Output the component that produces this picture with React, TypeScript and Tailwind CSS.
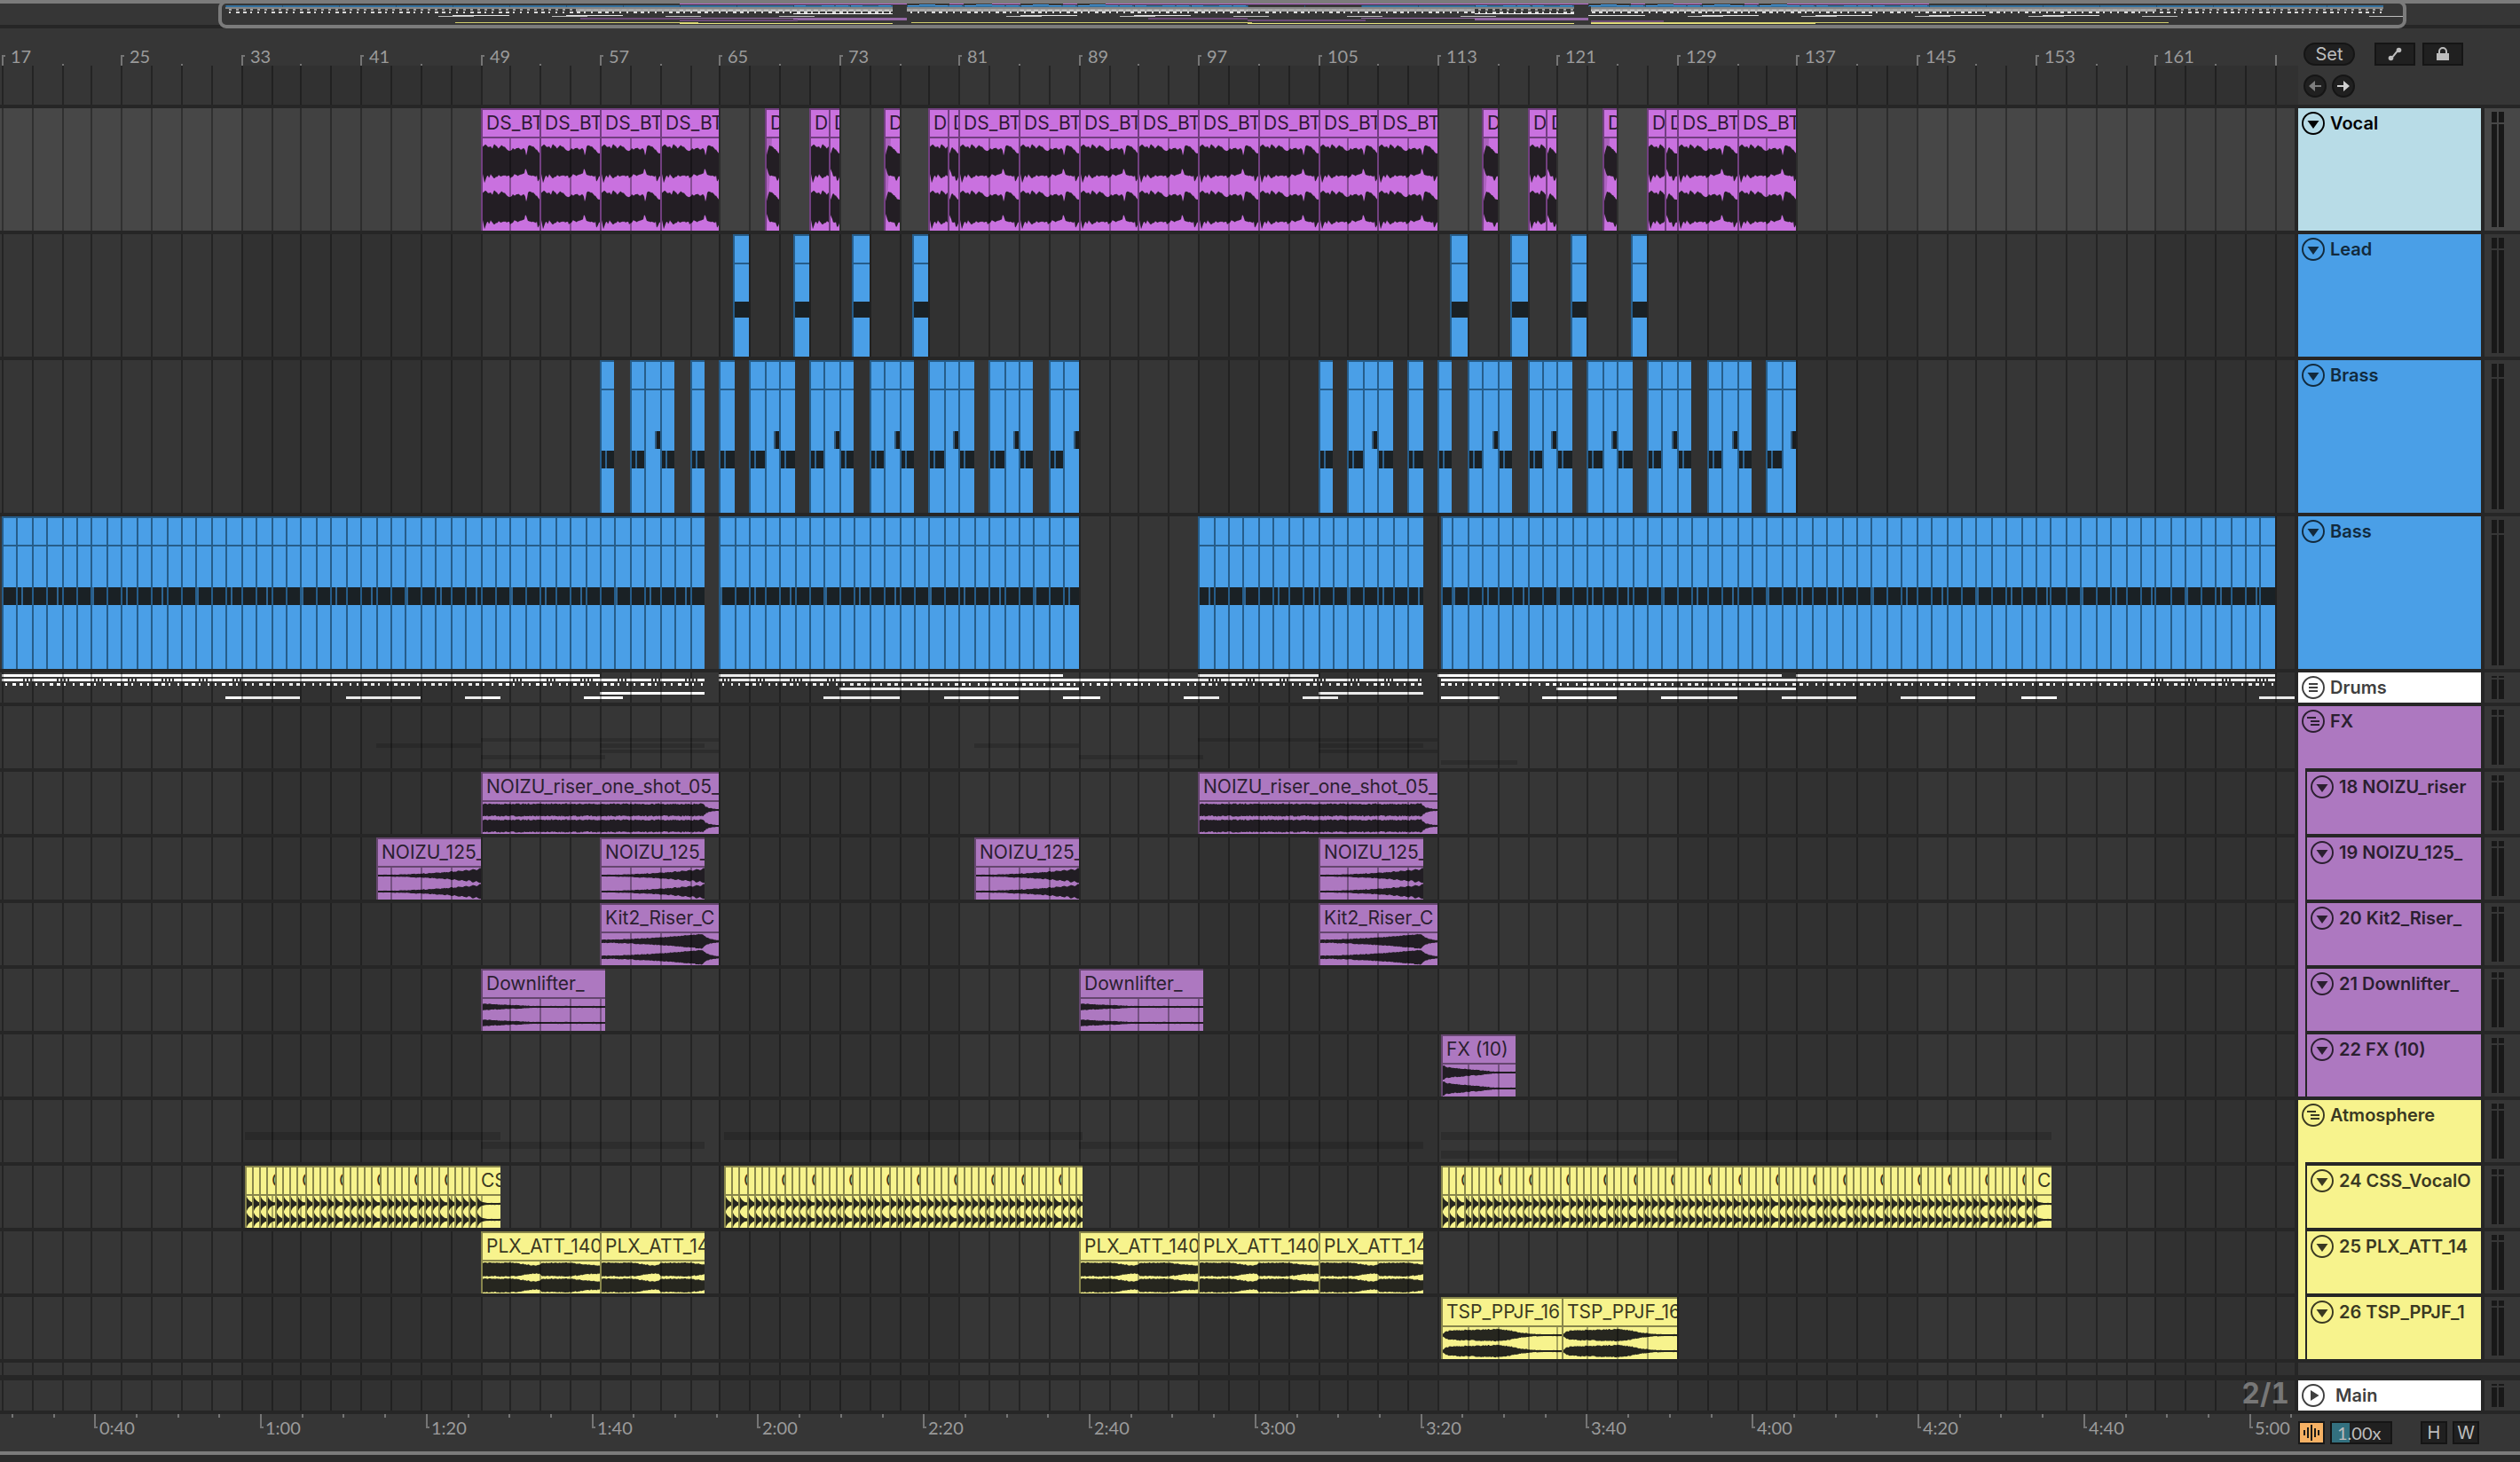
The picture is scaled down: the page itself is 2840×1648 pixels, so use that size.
import React from 'react';
import type { ReactNode } from 'react';

type Span = [number, number];
type Tone = 'vocal' | 'blue' | 'fx' | 'yellow';
type Envelope = (x: number, width: number) => [number, number];

/* ---------- timeline geometry ---------- */

const BAR_WIDTH = 16.855;
const barX = (bar: number) => 2 * Math.floor((2.86 + BAR_WIDTH * (bar - 17)) / 2);
const timeX = (sec: number) => Math.round(293 + (sec - 60) * 9.34);
const range = (n: number) => Array.from({ length: n }, (_, i) => i);
const noise = (i: number) => {
  const v = Math.sin(i * 12.9898 + 4.1) * 43758.5453;
  return v - Math.floor(v);
};

const GRID_PATH = range(140)
  .map((i) => `M${barX(17 + i * 2)} 0h2v200h-2z`)
  .join('');
const ZONES = range(8).map((i) => ({ x: barX(33 + i * 32), w: barX(49 + i * 32) - barX(33 + i * 32) }));

function GridOverlay() {
  return (
    <svg className="pointer-events-none absolute inset-0 h-full w-full" aria-hidden="true">
      {ZONES.map((z) => (
        <rect key={z.x} x={z.x} y="0" width={z.w} height="200" fill="#000" fillOpacity="0.08" />
      ))}
      <path d={GRID_PATH} fill="#000" fillOpacity="0.32" />
    </svg>
  );
}

/* ---------- waveforms ---------- */

const lerpPoints = (pts: [number, number, number][], t: number): [number, number] => {
  for (let i = 1; i < pts.length; i++) {
    if (t <= pts[i][0]) {
      const [t0, a0, b0] = pts[i - 1];
      const [t1, a1, b1] = pts[i];
      const f = (t - t0) / (t1 - t0 || 1);
      return [a0 + (a1 - a0) * f, b0 + (b1 - b0) * f];
    }
  }
  const last = pts[pts.length - 1];
  return [last[1], last[2]];
};

const VOCAL_POINTS: [number, number, number][] = [
  [0, 16, 14], [1, 17, 18], [2, 17, 23], [3, 18, 21], [5, 17, 15], [7, 15, 17], [9, 16, 14], [11, 14, 16],
  [13, 19, 18], [15, 17, 17], [18, 14, 15], [21, 18, 16], [24, 16, 14], [27, 13, 16], [30, 11, 15],
  [31, 11, 18], [34, 14, 16], [36, 13, 14], [40, 14, 15], [44, 13, 14], [47, 14, 12], [48, 11, 8], [49, 6, 8],
  [51, 15, 14], [53, 18, 15], [55, 17, 15], [58, 15, 16], [60, 13, 17], [61, 12, 15], [62, 11, 22],
  [63, 9, 21], [65, 8, 16],
];

const vocalEnvelope = (offsetBars: number): Envelope => (x) => {
  const t = x + offsetBars * BAR_WIDTH;
  const [u, d] = lerpPoints(VOCAL_POINTS, t);
  const k = offsetBars > 0 ? Math.min(1, 0.5 + x / 6) : 1;
  return [(u + noise(Math.round(t)) * 1.6) * k, (d + noise(Math.round(t) + 70) * 1.6) * k];
};

const mono = (fn: (t: number, x: number, width: number) => number, rough: number): Envelope => (x, width) => {
  const a = fn(x / width, x, width);
  const r = Math.min(rough, a * 0.4);
  return [Math.max(1, a + (noise(x) - 0.5) * r), Math.max(1, a + (noise(x + 300) - 0.5) * r)];
};

const riserEnvelope = mono((t, x, w) => (w - x > 18 ? 6.8 : 0.9 + 6 * Math.exp(-(18 - (w - x)) / 5)), 1.6);
const sweepEnvelope = mono((t, x) => (1 + 6.6 * t * t) * (1 + 0.14 * t * Math.sin(x * 0.78)), 0.8);
const kitEnvelope = mono((t) => (t < 0.86 ? 1.8 + 6.4 * Math.pow(t / 0.86, 1.7) : 1 + 7.4 * Math.exp(-(t - 0.86) * 22)), 1);
const downEnvelope = mono((t) => 1 + 2.6 * Math.max(0, 1 - t / 0.42), 0.8);
const impactEnvelope = mono((t) => 1 + 5.4 * Math.max(0, 1 - t / 0.72) + (t < 0.03 ? 1.5 : 0), 1);
const stabEnvelope = mono((t, x) => 1 + 7 * Math.exp(-x / 3), 0.4);
const padEnvelope = mono(
  (t) =>
    lerpPoints(
      [[0, 7.6, 0], [0.25, 7.8, 0], [0.32, 6.4, 0], [0.4, 5, 0], [0.45, 4.4, 0], [0.48, 5, 0], [0.5, 7.4, 0], [0.75, 7.6, 0], [0.82, 6.2, 0], [0.92, 5, 0], [1, 4.6, 0]],
      t,
    )[0],
  1.2,
);
const texEnvelope = mono(
  (t) =>
    lerpPoints(
      [[0, 1.5, 0], [0.03, 4.4, 0], [0.1, 5.6, 0], [0.3, 6, 0], [0.45, 6.8, 0], [0.55, 5.6, 0], [0.65, 2.8, 0], [0.75, 1.4, 0], [0.85, 1, 0], [1, 1, 0]],
      t,
    )[0],
  1.4,
);

function wavePath(width: number, height: number, env: Envelope) {
  const xs = range(width + 1);
  return [height / 4, (height * 3) / 4]
    .map((c) => {
      const up = xs.map((x) => `${x} ${(c - env(x, width)[0]).toFixed(1)}`);
      const down = xs.map((x) => `${x} ${(c + env(x, width)[1]).toFixed(1)}`).reverse();
      return `M${up.join('L')}L${down.join('L')}Z`;
    })
    .join('');
}

/* ---------- clips ---------- */

const CLIP_TONE: Record<Tone, { box: string; head: string; wave: string }> = {
  vocal: { box: 'bg-[#c971df] border-[#723f80]', head: 'border-[#723f80] text-[#2f1a35]', wave: '#231e24' },
  blue: { box: 'bg-[#4a9fe7] border-[#265d8a]', head: 'border-[#265d8a]', wave: '#1a2125' },
  fx: { box: 'bg-[#ad78c0] border-[#65466f]', head: 'border-[#65466f] text-[#2b1f30]', wave: '#211d23' },
  yellow: { box: 'bg-[#f7f38d] border-[#88864c]', head: 'border-[#88864c] text-[#3a3922]', wave: '#26261f' },
};

function Clip({ span, tone, label, children }: { span: Span; tone: Tone; label?: string; children?: ReactNode }) {
  const left = barX(span[0]);
  const width = barX(span[1]) - left;
  const t = CLIP_TONE[tone];
  return (
    <div className={`absolute inset-y-0 flex flex-col overflow-hidden border-t-2 border-l-2 ${t.box}`} style={{ left, width }}>
      <div className={`h-8 shrink-0 overflow-hidden border-b-2 pl-1 text-[21px] leading-[30px] whitespace-nowrap ${t.head}`}>
        {width > 9 ? label : null}
      </div>
      <svg className="min-h-0 w-full flex-1" aria-hidden="true">
        {children}
      </svg>
    </div>
  );
}

function AudioClip({ span, tone, label, env, body = 36, fade = false }: { span: Span; tone: Tone; label: string; env: Envelope; body?: number; fade?: boolean }) {
  const left = barX(span[0]);
  const width = barX(span[1]) - left - 2;
  const lines = range(90)
    .map((i) => barX(17 + i * 2) - left - 2)
    .filter((x) => x > 0 && x < width);
  return (
    <Clip span={span} tone={tone} label={label}>
      {fade && <path d={`M0 0H6L0 ${body}Z`} fill="#000" fillOpacity="0.14" />}
      <path d={wavePath(width, body, env)} fill={CLIP_TONE[tone].wave} />
      {lines.map((x) => (
        <rect key={x} x={x} y="0" width="2" height={body} fill="#000" fillOpacity="0.32" />
      ))}
    </Clip>
  );
}

/* ---------- arrangement data ---------- */

const VOCAL_CLIPS: { span: Span; offset: number; fade?: boolean }[] = [
  ...[49, 53, 57, 61].map((b) => ({ span: [b, b + 4] as Span, offset: 0 })),
  { span: [68, 69], offset: 3, fade: true },
  { span: [71, 72.25], offset: 0 },
  { span: [72.25, 73], offset: 3.25 },
  { span: [76, 77], offset: 3, fade: true },
  { span: [79, 80.25], offset: 0 },
  { span: [80.25, 81], offset: 3.25 },
  ...range(8).map((i) => ({ span: [81 + i * 4, 85 + i * 4] as Span, offset: 0 })),
  { span: [116, 117], offset: 3, fade: true },
  { span: [119, 120.25], offset: 0 },
  { span: [120.25, 121], offset: 3.25 },
  { span: [124, 125], offset: 3, fade: true },
  { span: [127, 128.25], offset: 0 },
  { span: [128.25, 129], offset: 3.25 },
  { span: [129, 133], offset: 0 },
  { span: [133, 137], offset: 0 },
];

const LEAD_CLIPS: Span[] = [65.9, 69.9, 73.9, 77.9, 113.85, 117.9, 121.9, 125.9].map((b) => [b, Math.ceil(b) + 1]);

const BRASS_PHRASE: [number, 'low' | 'high'][] = [
  [57, 'low'],
  [59, 'low'], [60, 'high'], [61, 'low'],
  [63, 'low'],
  [65, 'low'],
  ...[67, 71, 75, 79, 83].flatMap((b): [number, 'low' | 'high'][] => [[b, 'low'], [b + 1, 'high'], [b + 2, 'low']]),
  [87, 'low'], [88, 'high'],
];
const BRASS_CLIPS = [0, 48].flatMap((d) => BRASS_PHRASE.map(([b, kind]) => ({ bar: b + d, kind })));

const BASS_CLIPS: Span[] = [
  ...range(47).map((i): Span => [17 + i, 18 + i]),
  ...range(24).map((i): Span => [65 + i, 66 + i]),
  ...range(15).map((i): Span => [97 + i, 98 + i]),
  [113.2, 114],
  ...range(55).map((i): Span => [114 + i, 115 + i]),
];

const bassMarks = ([a, b]: Span) =>
  [2.05, 4.3, 6.65]
    .map((p) => Math.floor(a / 7) * 7 + p)
    .flatMap((p) => [p, p + 7])
    .filter((p) => p >= a && p < b)
    .map((p) => barX(p) - barX(a) - 2);

const HAT_SIZES = [2, 4, 4, 2, 2, 2, 4, 4, 2, 2, 4, 4, 2, 2];
const inSpans = (b: number, spans: Span[]) => spans.some(([s, e]) => b >= s && b < e);
const PLAYED: Span[] = [[17, 64], [65, 112], [113.2, 169]];
const KICK: Span[] = [[17, 57], [65, 88], [97, 105], [113, 136], [137, 169]];
const RIDE: Span[] = [[73, 89], [121, 137]];
const FILL: Span[] = [[57, 64], [105, 112]];
const CRASH: Span[] = [
  [32, 37], [40, 45], [48, 50.4], [55.9, 58.5], [72, 77], [80, 85], [88, 90.4], [96, 98.4], [104, 106.4],
  [113.2, 117.2], [120, 125], [128, 133], [136, 141], [144, 149], [152, 154.4], [168, 172],
];
const ROLLS: Span[] = [[17, 33], [49, 64], [65, 73.4], [97, 112], [160.5, 169]];
const HATS = range(310)
  .map((i) => ({ bar: 17.22 + i * 0.5, size: HAT_SIZES[i % 14] }))
  .filter((h) => inSpans(h.bar, PLAYED));
const ROLL_GAPS = range(24)
  .flatMap((i) => [i * 7 + 2.15, i * 7 + 4.45, i * 7 + 6.7].map((b, k) => ({ bar: b, n: k === 2 ? 4 : 3 })))
  .filter((r) => inSpans(r.bar, ROLLS));

const bars = (spans: Span[], y: number, h: number, fill: string, opacity = 1) =>
  spans.map(([a, b]) => <rect key={`${y}-${a}`} x={barX(a)} y={y} width={barX(b) - barX(a)} height={h} fill={fill} fillOpacity={opacity} />);

function DrumsOverview() {
  return (
    <svg className="absolute inset-0 h-full w-full" aria-hidden="true">
      {bars(KICK, 2, 3, '#fff')}
      {bars(PLAYED, 7, 3, '#fff')}
      {ROLL_GAPS.flatMap((r) =>
        range(r.n).map((i) => <rect key={`${r.bar}-${i}`} x={barX(r.bar) + i * 4} y="7" width="2" height="3" fill="#363636" />),
      )}
      {HATS.map((h) => (
        <rect key={h.bar} x={barX(h.bar)} y="12" width={h.size} height="3" fill="#fff" />
      ))}
      {bars(RIDE, 17, 3, '#fff')}
      {bars(FILL, 22, 3, '#fff')}
      {bars(CRASH, 27, 3, '#fff')}
    </svg>
  );
}

function GroupOverview({ rows }: { rows: { y: number; h: number; spans: Span[] }[] }) {
  return (
    <svg className="absolute inset-0 h-full w-full" aria-hidden="true">
      {rows.map((r) => (
        <g key={r.y}>{bars(r.spans, r.y, r.h, '#000', 0.16)}</g>
      ))}
    </svg>
  );
}

const FX_ROWS: { y: number; h: number; spans: Span[] }[] = [
  { y: 36, h: 4, spans: [[49, 65], [97, 113]] },
  { y: 42, h: 5, spans: [[42, 49], [57, 64], [82, 89], [105, 112]] },
  { y: 49, h: 4, spans: [[57, 65], [105, 113]] },
  { y: 55, h: 5, spans: [[49, 57.3], [89, 97.3]] },
  { y: 61, h: 5, spans: [[113.2, 118.3]] },
];
const ATMO_ROWS: { y: number; h: number; spans: Span[] }[] = [
  { y: 36, h: 9, spans: [[33.25, 50.3], [65.25, 89.3], [113.2, 154.1]] },
  { y: 47, h: 8, spans: [[49, 64], [89, 112]] },
  { y: 57, h: 9, spans: [[113.2, 129]] },
];

const chopped = (start: number, count: number, end: number): Span[] =>
  range(count).map((i) => [start + i * 0.5, i === count - 1 ? end : start + (i + 1) * 0.5]);
const CSS_CLIPS: Span[] = [...chopped(33.24, 32, 50.35), ...chopped(65.3, 48, 89.25), ...chopped(113.24, 80, 154.1)];

/* ---------- track headers ---------- */

type IconKind = 'fold' | 'drums' | 'group' | 'play';

function CircleIcon({ kind }: { kind: IconKind }) {
  return (
    <svg className="size-[26px]" viewBox="0 0 26 26" fill="none" stroke="currentColor" strokeWidth="2" aria-hidden="true">
      <circle cx="13" cy="13" r="12" strokeWidth="1.9" />
      {kind === 'fold' && <path d="M6.5 10h13L13 19z" fill="currentColor" stroke="none" />}
      {kind === 'drums' && <path d="M8 9h10M8 13h10M8 17h10" />}
      {kind === 'group' && <path d="M6 9h10M10 13h10M10 17h10" />}
      {kind === 'play' && <path d="M10 7l9.5 6L10 19z" fill="currentColor" stroke="none" />}
    </svg>
  );
}

function TrackTitle({ name, icon, tone, gap = 'gap-1.5' }: { name: string; icon: IconKind; tone: string; gap?: string }) {
  return (
    <div className={`min-w-0 flex-1 overflow-hidden ${tone}`}>
      <div className={`flex h-[34px] items-center pl-1 ${gap}`}>
        <button type="button" aria-label={`Fold ${name}`} className="shrink-0">
          <CircleIcon kind={icon} />
        </button>
        <span className="text-xl font-semibold whitespace-nowrap">{name}</span>
      </div>
    </div>
  );
}

function Meter({ selected = false }: { selected?: boolean }) {
  return (
    <div className={`flex w-10 shrink-0 gap-0.5 py-1 pl-2 ${selected ? 'bg-[#474747]' : 'bg-[#363636]'}`}>
      {[0, 1].map((i) => (
        <div key={i} className="flex w-1.5 flex-col gap-0.5">
          <div className="flex-[2] bg-[#181818]" />
          <div className="flex-[19] bg-[#181818]" />
        </div>
      ))}
    </div>
  );
}

interface TrackProps {
  name: string;
  icon?: IconKind;
  tone: string;
  height: string;
  selected?: boolean;
  parent?: string;
  last?: boolean;
  under?: ReactNode;
  children?: ReactNode;
}

function Track({ name, icon = 'fold', tone, height, selected = false, parent, last = false, under, children }: TrackProps) {
  return (
    <section className="flex" aria-label={name}>
      <div className={`relative mr-1 mb-1 min-w-0 flex-1 overflow-hidden ${height} ${selected ? 'bg-[#474747]' : 'bg-[#363636]'}`}>
        {under}
        <GridOverlay />
        {children}
      </div>
      <div className="mr-1 flex w-[206px] shrink-0">
        {parent && <div className={`mr-0.5 w-2 shrink-0 ${last ? 'mb-1' : ''} ${parent}`} />}
        <div className={`flex min-w-0 flex-1 ${icon === 'group' ? '' : 'mb-1'}`}>
          {icon === 'group' ? (
            <div className="flex min-w-0 flex-1 flex-col">
              <TrackTitle name={name} icon={icon} tone={tone} />
              <div className={`h-1 w-2 ${tone}`} />
            </div>
          ) : (
            <TrackTitle name={name} icon={icon} tone={tone} />
          )}
        </div>
      </div>
      <div className="mb-1 flex">
        <Meter selected={selected} />
      </div>
    </section>
  );
}

/* ---------- top overview ---------- */

const ovX = (bar: number) => 254 + 16 * (bar - 17);
const ovBars = (spans: Span[], y: number, h: number, fill: string) =>
  spans.map(([a, b]) => <rect key={`${y}-${a}-${fill}`} x={ovX(a)} y={y} width={ovX(b) - ovX(a)} height={h} fill={fill} />);

function SongOverview() {
  return (
    <header className="flex h-8 flex-col border-t-4 border-[#7b7b7b] bg-[#363636]">
      <div className="relative h-7 border-b-4 border-[#262626]">
        <svg className="absolute inset-x-0 top-0 h-7 w-full" viewBox="0 4 2840 28" preserveAspectRatio="none" shapeRendering="crispEdges" aria-label="Song overview">
          {ovBars(VOCAL_CLIPS.map((c) => c.span), 4, 1, '#b865cc')}
          {ovBars(LEAD_CLIPS, 5, 1, '#4a9fe7')}
          {ovBars([[17, 64], [65, 89], [97, 112], [113.2, 169]], 6, 2, '#34719f')}
          {ovBars(BRASS_CLIPS.map((c): Span => [c.bar, c.bar + 0.9]), 6, 1, '#4a9fe7')}
          {range(38).map((i) => (
            <rect key={i} x={ovX(17 + i * 4)} y="6" width="1" height="2" fill="#2a5578" />
          ))}
          {ovBars(PLAYED, 8, 2, '#858585')}
          {ovBars([[41.7, 64], [65, 105], [113.2, 153]], 10, 3, '#a8a8a8')}
          {ovBars([[49, 64], [73, 89], [113.2, 129]], 11, 2, '#c2c2c2')}
          {HATS.map((h) => (
            <g key={h.bar}>
              <rect x={ovX(h.bar)} y="10" width="3" height="2" fill="#a0a0a0" />
              <rect x={ovX(h.bar)} y="13" width={h.size} height="2" fill="#dcdcdc" />
            </g>
          ))}
          {ovBars(FILL, 15, 1, '#f2f2f2')}
          {ovBars([[33, 37], [41, 45], [73, 77], [81, 85], [113, 117], [121, 125], [129, 133], [137, 141], [145, 149]], 17, 1, '#e6e6e6')}
          {ovBars([32, 40, 48, 56, 72, 80, 88, 96, 104, 120, 128, 136, 144, 152, 168].map((b): Span => [b, b + 2.5]), 18, 1, '#bdbdbd')}
          {ovBars([[42, 49], [82, 89]], 20, 2, '#6b4a76')}
          {ovBars([[49, 65], [97, 113]], 20, 1, '#9468a5')}
          {ovBars([[57, 65], [105, 113]], 20, 3, '#9468a5')}
          {ovBars([[49, 57.3], [89, 97.3]], 22, 2, '#6b4a76')}
          {ovBars([[113.2, 118.3]], 23, 2, '#6b4a76')}
          {ovBars([[33.2, 50.3], [65.3, 89.3], [113.2, 153.9]], 25, 1, '#cfcb6c')}
          {ovBars([[49, 64], [89, 112], [113.2, 129]], 26, 1, '#e8e47e')}
        </svg>
        <svg className="absolute inset-x-0 -top-1 h-8 w-full" viewBox="0 0 2840 32" preserveAspectRatio="none" aria-hidden="true">
          <rect x="248" y="2" width="2462" height="28" rx="7" fill="none" stroke="#7b7b7b" strokeWidth="4" />
        </svg>
      </div>
    </header>
  );
}

/* ---------- rulers and tool buttons ---------- */

const RULER_BARS = range(19).map((i) => 17 + i * 8);
const RULER_TICKS =
  RULER_BARS.map((b) => `M${barX(b)} 30h4v2h-2v10h-2z`).join('') +
  `M${barX(169)} 30h2v12h-2z` +
  RULER_BARS.map((b) => `M${barX(b + 4)} 40h2v2h-2z`).join('');

const TIMES = range(14).map((i) => 40 + i * 20);
const clock = (s: number) => `${Math.floor(s / 60)}:${String(s % 60).padStart(2, '0')}`;
const TIME_TICKS =
  TIMES.map((s) => `M${timeX(s)} 0h2v14h2v2h-4z`).join('') +
  range(64)
    .map((i) => 20 + i * 5)
    .filter((s) => s % 20 !== 0)
    .map((s) => `M${timeX(s)} 0h2v4h-2z`)
    .join('');

function BarRuler() {
  return (
    <div className="relative h-[42px] text-xl font-normal text-[#9b9b9b]">
      <svg className="absolute inset-0 h-full w-full" aria-hidden="true">
        <path d={RULER_TICKS} fill="#757575" />
      </svg>
      {RULER_BARS.map((b) => (
        <span key={b} className="absolute top-4 font-[Lato,sans-serif] leading-[30px]" style={{ left: barX(b) + 10 }}>
          {b}
        </span>
      ))}
    </div>
  );
}

function TimeRuler() {
  return (
    <div className="relative h-[42px] min-w-0 flex-1 overflow-hidden text-xl text-[#9b9b9b]">
      <svg className="absolute inset-0 h-full w-full" aria-hidden="true">
        <path d={TIME_TICKS} fill="#757575" />
      </svg>
      {TIMES.map((s) => (
        <span key={s} className="absolute font-[Lato,sans-serif] leading-[30px]" style={{ left: timeX(s) + 6 }}>
          {clock(s)}
        </span>
      ))}
    </div>
  );
}

const DARK_BUTTON = 'flex items-center justify-center border-2 border-[#151515] bg-[#202020] text-[#bdbdbd]';

function TopControls() {
  return (
    <div className="flex w-[250px] shrink-0 flex-col gap-2.5 pt-4 pl-1.5">
      <div className="flex">
        <button type="button" className={`h-[26px] w-[58px] rounded-full text-xl leading-none ${DARK_BUTTON}`}>
          Set
        </button>
        <button type="button" aria-label="Automation mode" className={`ml-[22px] h-[26px] w-[46px] ${DARK_BUTTON}`}>
          <svg className="h-4 w-4" viewBox="0 0 16 16" fill="none" aria-hidden="true">
            <circle cx="3.5" cy="12.5" r="2.8" fill="currentColor" />
            <circle cx="12.5" cy="3.5" r="2.8" fill="currentColor" />
            <path d="M4 12C8 10 8 6 12 4" stroke="currentColor" strokeWidth="2.2" />
          </svg>
        </button>
        <button type="button" aria-label="Lock envelopes" className={`ml-2 h-[26px] w-[46px] ${DARK_BUTTON}`}>
          <svg className="h-4 w-4" viewBox="0 0 16 16" fill="none" aria-hidden="true">
            <rect x="1" y="7" width="14" height="8" fill="currentColor" />
            <path d="M4 8V5a4 4 0 0 1 8 0v3" stroke="currentColor" strokeWidth="2" />
          </svg>
        </button>
      </div>
      <div className="flex gap-1.5">
        <button type="button" aria-label="Previous locator" className={`size-[26px] rounded-full ${DARK_BUTTON}`}>
          <svg className="size-4 shrink-0" viewBox="0 0 16 16" fill="#7d7d7d" aria-hidden="true">
            <path d="M1 8l7-6v5h7v2H8v5z" />
          </svg>
        </button>
        <button type="button" aria-label="Next locator" className={`size-[26px] rounded-full ${DARK_BUTTON}`}>
          <svg className="size-4 shrink-0" viewBox="0 0 16 16" fill="#d0d0d0" aria-hidden="true">
            <path d="M15 8L8 2v5H1v2h7v5z" />
          </svg>
        </button>
      </div>
    </div>
  );
}

function BottomControls() {
  return (
    <div className="flex w-[250px] shrink-0 pt-2">
      <button type="button" aria-label="Waveform zoom" className="flex h-[26px] w-[30px] items-center justify-center border-2 border-[#181818] bg-[#f6b164]">
        <svg className="h-5 w-5 shrink-0" viewBox="0 0 20 20" stroke="#1c1a16" strokeWidth="2" aria-hidden="true">
          <path d="M2 7v6M6 4v12M10 1v18M14 5v10M18 7v6" />
        </svg>
      </button>
      <input
        type="text"
        aria-label="Playback speed"
        defaultValue="1.00x"
        className="ml-1.5 h-[26px] w-[70px] border-2 border-[#151515] bg-[linear-gradient(to_right,#33707f_20px,#202020_20px)] pl-1.5 font-[Lato,sans-serif] text-xl leading-none text-[#bdbdbd]"
      />
      <button type="button" className={`ml-8 h-[26px] w-[30px] text-xl leading-none ${DARK_BUTTON}`}>
        H
      </button>
      <button type="button" className={`ml-1.5 h-[26px] w-[30px] text-xl leading-none ${DARK_BUTTON}`}>
        W
      </button>
    </div>
  );
}

/* ---------- page ---------- */

const BLUE_TITLE = 'bg-[#4a9fe7] text-[#122a3d]';
const FX_TITLE = 'bg-[#ad78c0] text-[#2b1f30]';
const YELLOW_TITLE = 'bg-[#f7f38d] text-[#3a3922]';
const WHITE_TITLE = 'bg-white text-[#3f3f3f]';

export default function App() {
  return (
    <div className="flex min-h-screen w-full flex-col overflow-hidden bg-[#262626] font-[Inter,sans-serif] leading-tight">
      <SongOverview />

      <div className="mb-1 flex bg-[#363636]">
        <div className="min-w-0 flex-1 overflow-hidden">
          <BarRuler />
          <div className="relative h-11">
            <GridOverlay />
          </div>
        </div>
        <TopControls />
      </div>

      <main>
        <Track name="Vocal" tone="bg-[#b8dce7] text-black" height="h-[138px]" selected>
          {VOCAL_CLIPS.map((c) => (
            <AudioClip key={c.span[0]} span={c.span} tone="vocal" label="DS_BT" env={vocalEnvelope(c.offset)} body={104} fade={c.fade} />
          ))}
        </Track>

        <Track name="Lead" tone={BLUE_TITLE} height="h-[138px]">
          {LEAD_CLIPS.map((s) => (
            <Clip key={s[0]} span={s} tone="blue">
              <rect x="0" y="42" width="100%" height="18" fill="#1a2125" />
            </Clip>
          ))}
        </Track>

        <Track name="Brass" tone={BLUE_TITLE} height="h-[172px]">
          {BRASS_CLIPS.map(({ bar, kind }) => {
            const w = barX(bar + 1) - barX(bar) - 2;
            return (
              <Clip key={bar} span={[bar, bar + 1]} tone="blue">
                {kind === 'low' ? (
                  <>
                    <rect x="0" y="68" width="100%" height="20" fill="#1a2125" />
                    <rect x="4" y="68" width="2" height="20" fill="#2e6491" />
                  </>
                ) : (
                  <>
                    <rect x={w - 6} y="46" width="6" height="20" fill="#1a1d1f" />
                    <rect x={w - 6} y="46" width="2" height="20" fill="#2e5a80" />
                  </>
                )}
              </Clip>
            );
          })}
        </Track>

        <Track name="Bass" tone={BLUE_TITLE} height="h-[172px]">
          {BASS_CLIPS.map((s) => (
            <Clip key={s[0]} span={s} tone="blue">
              <rect x="0" y="46" width="100%" height="20" fill="#1a2125" />
              {bassMarks(s).map((x) => (
                <rect key={x} x={x} y="46" width="2" height="20" fill="#2e6491" />
              ))}
            </Clip>
          ))}
        </Track>

        <Track name="Drums" icon="drums" tone={WHITE_TITLE} height="h-[34px]" under={<DrumsOverview />} />

        <Track name="FX" icon="group" tone={FX_TITLE} height="h-[70px]" under={<GroupOverview rows={FX_ROWS} />} />
        <Track name="18 NOIZU_riser" tone={FX_TITLE} parent="bg-[#ad78c0]" height="h-[70px]">
          {[49, 97].map((b) => (
            <AudioClip key={b} span={[b, b + 16]} tone="fx" label="NOIZU_riser_one_shot_05_" env={riserEnvelope} />
          ))}
        </Track>
        <Track name="19 NOIZU_125_" tone={FX_TITLE} parent="bg-[#ad78c0]" height="h-[70px]">
          {[42, 57, 82, 105].map((b) => (
            <AudioClip key={b} span={[b, b + 7]} tone="fx" label="NOIZU_125_" env={sweepEnvelope} />
          ))}
        </Track>
        <Track name="20 Kit2_Riser_" tone={FX_TITLE} parent="bg-[#ad78c0]" height="h-[70px]">
          {[57, 105].map((b) => (
            <AudioClip key={b} span={[b, b + 8]} tone="fx" label="Kit2_Riser_C" env={kitEnvelope} />
          ))}
        </Track>
        <Track name="21 Downlifter_" tone={FX_TITLE} parent="bg-[#ad78c0]" height="h-[70px]">
          {[49, 89].map((b) => (
            <AudioClip key={b} span={[b, b + 8.3]} tone="fx" label="Downlifter_" env={downEnvelope} />
          ))}
        </Track>
        <Track name="22 FX (10)" tone={FX_TITLE} parent="bg-[#ad78c0]" height="h-[70px]" last>
          <AudioClip span={[113.2, 118.25]} tone="fx" label="FX (10)" env={impactEnvelope} />
        </Track>

        <Track name="Atmosphere" icon="group" tone={YELLOW_TITLE} height="h-[70px]" under={<GroupOverview rows={ATMO_ROWS} />} />
        <Track name="24 CSS_VocalO" tone={YELLOW_TITLE} parent="bg-[#f7f38d]" height="h-[70px]">
          {CSS_CLIPS.map((s) => (
            <AudioClip key={s[0]} span={s} tone="yellow" label="CSS" env={stabEnvelope} />
          ))}
        </Track>
        <Track name="25 PLX_ATT_14" tone={YELLOW_TITLE} parent="bg-[#f7f38d]" height="h-[70px]">
          {([[49, 57], [57, 64], [89, 97], [97, 105], [105, 112]] as Span[]).map((s) => (
            <AudioClip
              key={s[0]}
              span={s}
              tone="yellow"
              label="PLX_ATT_140"
              env={(x) => padEnvelope(x, 134)}
            />
          ))}
        </Track>
        <Track name="26 TSP_PPJF_1" tone={YELLOW_TITLE} parent="bg-[#f7f38d]" height="h-[70px]" last>
          {([[113.2, 121.35], [121.35, 129]] as Span[]).map((s) => (
            <AudioClip key={s[0]} span={s} tone="yellow" label="TSP_PPJF_16" env={(x) => texEnvelope(x, 134)} />
          ))}
        </Track>
      </main>

      <div className="mb-1.5 flex h-3.5">
        <div className="relative mr-1 min-w-0 flex-1 overflow-hidden bg-[#363636]">
          <GridOverlay />
        </div>
        <div className="w-[250px] shrink-0 bg-[#363636]" />
      </div>

      <section className="mb-1 flex h-[34px]" aria-label="Main">
        <div className="relative mr-1 min-w-0 flex-1 overflow-hidden bg-[#363636]">
          <GridOverlay />
          <span className="absolute top-0 right-1.5 text-[32px] leading-[30px] font-bold text-[#777] tabular-nums">2/1</span>
        </div>
        <div className="mr-1 flex w-[206px] shrink-0">
          <TrackTitle name="Main" icon="play" tone={WHITE_TITLE} gap="gap-3" />
        </div>
        <Meter />
      </section>

      <footer className="flex flex-1 flex-col">
        <div className="flex border-b-4 border-[#7b7b7b] bg-[#363636]">
          <TimeRuler />
          <div className="w-1 shrink-0" />
          <BottomControls />
        </div>
        <div className="min-h-2 flex-1 bg-[#2b2b2b]" />
      </footer>
    </div>
  );
}
